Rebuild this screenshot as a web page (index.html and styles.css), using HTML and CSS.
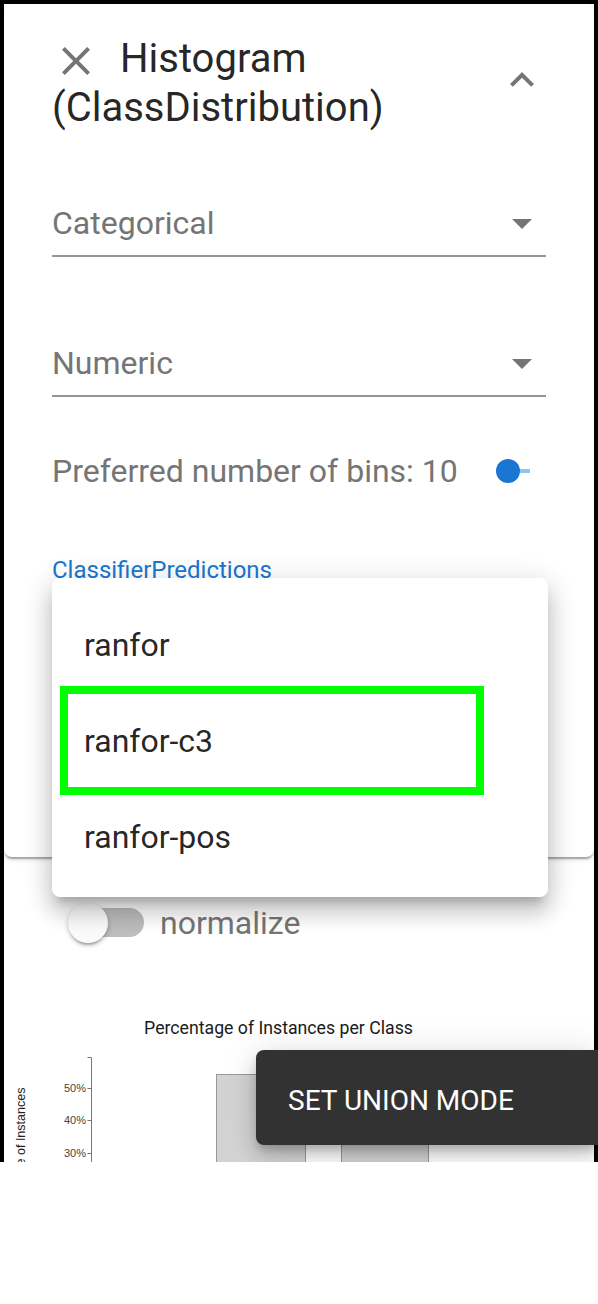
FILE: index.html
```html
<!DOCTYPE html>
<html lang="en">
<head>
<meta charset="utf-8">
<title>Histogram (ClassDistribution)</title>
<link rel="stylesheet" href="styles.css">
</head>
<body>
<div class="device">
  <div class="screen">
    <section class="panel">
      <div class="panel-head">
        <h2 class="title"><svg class="close" viewBox="0 0 24 24"><path d="M19 6.41L17.59 5 12 10.59 6.41 5 5 6.41 10.59 12 5 17.59 6.41 19 12 13.41 17.59 19 19 17.59 13.41 12z"/></svg>Histogram (ClassDistribution)</h2>
        <svg class="chevron" viewBox="0 0 24 24"><path d="M12 8l-6 6 1.41 1.41L12 10.83l4.59 4.58L18 14z"/></svg>
      </div>
      <div class="field first"><span class="placeholder">Categorical</span><svg class="arrow" viewBox="0 0 24 24"><path d="M7 10l5 5 5-5z"/></svg></div>
      <div class="field second"><span class="placeholder">Numeric</span><svg class="arrow" viewBox="0 0 24 24"><path d="M7 10l5 5 5-5z"/></svg></div>
      <div class="bins">
        <span class="placeholder">Preferred number of bins: 10</span>
        <div class="slider"><span class="thumb"></span><span class="rail"></span></div>
      </div>
      <div class="pred">
        <div class="pred-label">ClassifierPredictions</div>
        <div class="field pred-field"><svg class="arrow" viewBox="0 0 24 24"><path d="M7 10l5 5 5-5z"/></svg></div>
      </div>
    </section>

    <div class="normalize">
      <span class="switch"><span class="track"></span><span class="knob"></span></span>
      <span class="placeholder">normalize</span>
    </div>

    <svg class="chart" width="590" height="300" viewBox="0 0 590 300">
      <text class="chart-title" x="274.5" y="34" text-anchor="middle">Percentage of Instances per Class</text>
      <rect class="bar" x="212.5" y="74.5" width="89" height="300"/>
      <rect class="bar" x="337.5" y="100.5" width="87" height="300"/>
      <path class="axis" d="M83.5,57.5H87.5V300"/>
      <path class="axis" d="M83.5,88.5H87.5M83.5,120.5H87.5M83.5,153.5H87.5M83.5,185.5H87.5"/>
      <text class="tick" x="82" y="92">50%</text>
      <text class="tick" x="82" y="124">40%</text>
      <text class="tick" x="82" y="157">30%</text>
      <text class="axis-title" transform="translate(21,155) rotate(-90)" text-anchor="middle">Percentage of Instances</text>
    </svg>

    <div class="menu">
      <div class="item">ranfor</div>
      <div class="item">ranfor-c3</div>
      <div class="item">ranfor-pos</div>
    </div>
    <div class="highlight"></div>
  </div>
  <div class="snackbar">SET UNION MODE</div>
</div>
</body>
</html>
```

FILE: styles.css
```css
html, body {
  margin: 0;
  background: #fff;
}
body {
  font-family: Roboto, "Noto Sans", Arial, sans-serif;
}
.device {
  position: relative;
  width: 598px;
  height: 1162px;
  box-sizing: border-box;
  padding: 4px 4px 0;
  background: #000;
}
.screen {
  position: relative;
  height: 1158px;
  background: #fff;
  overflow: hidden;
}
.panel {
  background: #fff;
  border-radius: 8px;
  padding: 30px 48px 211px;
  box-shadow: 0 4px 2px -2px rgba(0,0,0,0.2), 0 2px 2px 0 rgba(0,0,0,0.14), 0 2px 6px 0 rgba(0,0,0,0.12);
}
.panel-head {
  display: flex;
  align-items: flex-start;
}
.title {
  flex: 1;
  margin: 0;
  font-size: 40px;
  line-height: 49px;
  font-weight: 400;
  color: rgba(0,0,0,0.87);
}
.close {
  display: inline-block;
  width: 48px;
  height: 48px;
  fill: #757575;
  vertical-align: -7px;
  margin: -6px 20px -6px 0;
}
.chevron {
  flex: none;
  width: 48px;
  height: 48px;
  margin-top: 22px;
  fill: #757575;
}
.field {
  display: flex;
  align-items: center;
  justify-content: space-between;
  height: 40px;
  padding-bottom: 12px;
  border-bottom: 2px solid #949494;
  font-size: 32px;
  line-height: 40px;
}
.field.first { margin-top: 71px; }
.field.second { margin-top: 86px; }
.pred-field { justify-content: flex-end; }
.arrow {
  flex: none;
  width: 48px;
  height: 48px;
  margin: -4px 0;
  fill: #757575;
}
.placeholder {
  color: #757575;
  font-size: 32px;
  line-height: 40px;
}
.bins {
  display: flex;
  align-items: center;
  margin-top: 54px;
  height: 40px;
}
.slider {
  display: flex;
  align-items: center;
  margin-left: auto;
  margin-right: 16px;
}
.thumb {
  width: 24px;
  height: 24px;
  border-radius: 50%;
  background: #1976d2;
}
.rail {
  width: 10px;
  height: 4px;
  background: #90c4f4;
}
.pred {
  margin-top: 65px;
}
.pred-label {
  font-size: 24px;
  line-height: 28px;
  color: #1976d2;
}
.pred-field {
  margin-top: 8px;
}
.normalize {
  display: flex;
  align-items: center;
  gap: 16px;
  margin: 46px 0 0 64px;
  height: 40px;
}
.switch {
  position: relative;
  width: 76px;
  height: 40px;
  flex: none;
}
.track {
  position: absolute;
  left: 2px;
  top: 5px;
  width: 74px;
  height: 29px;
  border-radius: 15px;
  background: #bdbdbd;
}
.knob {
  position: absolute;
  left: 0;
  top: 0;
  width: 40px;
  height: 40px;
  border-radius: 50%;
  background: #fafafa;
  box-shadow: 0 4px 2px -2px rgba(0,0,0,0.2), 0 2px 4px 0 rgba(0,0,0,0.14), 0 2px 6px 0 rgba(0,0,0,0.12);
}
.chart {
  display: block;
  margin-top: 57px;
}
.chart-title {
  font-family: Roboto, Arial, sans-serif;
  font-size: 17.7px;
  fill: #1a1a1a;
}
.bar {
  fill: #d3d3d3;
  stroke: #999;
  stroke-width: 1;
}
.axis {
  fill: none;
  stroke: #777;
  stroke-width: 1;
}
.tick {
  font-family: "Liberation Sans", Arial, sans-serif;
  font-size: 11px;
  fill: #444;
  text-anchor: end;
}
.axis-title {
  font-family: "Liberation Sans", Arial, sans-serif;
  font-size: 12.5px;
  fill: #222;
}
.menu {
  position: absolute;
  left: 48px;
  top: 574px;
  width: 496px;
  height: 319px;
  box-sizing: border-box;
  padding: 19px 0 12px;
  background: #fff;
  border-radius: 8px;
  box-shadow: 0 10px 10px -6px rgba(0,0,0,0.2), 0 16px 20px 2px rgba(0,0,0,0.14), 0 6px 28px 4px rgba(0,0,0,0.12);
}
.item {
  display: flex;
  align-items: center;
  height: 96px;
  padding: 0 32px;
  font-size: 32px;
  line-height: 48px;
  color: rgba(0,0,0,0.87);
}
.highlight {
  position: absolute;
  left: 56px;
  top: 682px;
  width: 424px;
  height: 109px;
  box-sizing: border-box;
  border: 8px solid #00ff00;
}
.snackbar {
  position: absolute;
  left: 256px;
  right: 0;
  top: 1050px;
  height: 95px;
  display: flex;
  align-items: center;
  box-sizing: border-box;
  padding: 6px 0 0 32px;
  background: #323232;
  border-radius: 8px 0 0 8px;
  color: #fff;
  font-size: 28px;
  line-height: 40px;
  box-shadow: 0 6px 10px -2px rgba(0,0,0,0.2), 0 12px 20px 0 rgba(0,0,0,0.14), 0 2px 36px 0 rgba(0,0,0,0.12);
}
```
